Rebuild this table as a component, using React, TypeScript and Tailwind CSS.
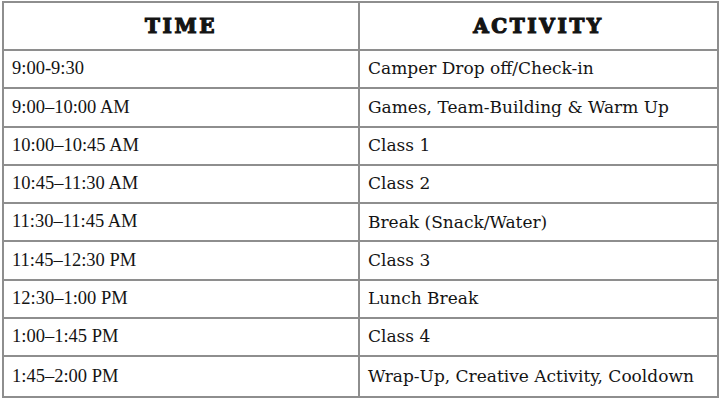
const rows = [
  { time: '9:00-9:30', activity: 'Camper Drop off/Check-in' },
  { time: '9:00–10:00 AM', activity: 'Games, Team-Building & Warm Up' },
  { time: '10:00–10:45 AM', activity: 'Class 1' },
  { time: '10:45–11:30 AM', activity: 'Class 2' },
  { time: '11:30–11:45 AM', activity: 'Break (Snack/Water)' },
  { time: '11:45–12:30 PM', activity: 'Class 3' },
  { time: '12:30–1:00 PM', activity: 'Lunch Break' },
  { time: '1:00–1:45 PM', activity: 'Class 4' },
  { time: '1:45–2:00 PM', activity: 'Wrap-Up, Creative Activity, Cooldown' },
];

export default function App() {
  return (
    <div className="w-[720px] h-[400px] bg-white pl-[2px] pt-[1px]">
      <div className="w-[717px] border-2 border-[#8e8e8e] text-[#141414]">
        {/* header */}
        <div className="grid grid-cols-[356px_1fr] h-[48px] border-b-2 border-[#8e8e8e]">
          <div className="flex items-center justify-center border-r-2 border-[#8e8e8e] font-['DejaVu_Serif',serif] font-bold text-[20px] tracking-[2.6px] [-webkit-text-stroke:1.2px_#141414]">
            TIME
          </div>
          <div className="flex items-center justify-center font-['DejaVu_Serif',serif] font-bold text-[20px] tracking-[2.6px] [-webkit-text-stroke:1.2px_#141414]">
            ACTIVITY
          </div>
        </div>

        {/* body */}
        {rows.map((row, i) => (
          <div
            key={i}
            className={`grid grid-cols-[356px_1fr] h-[38.3px] ${i < rows.length - 1 ? 'border-b-2 border-[#8e8e8e]' : ''}`}
          >
            <div className="flex items-center pl-[8px] border-r-2 border-[#8e8e8e] font-['Liberation_Serif',serif] text-[18.5px]">
              {row.time}
            </div>
            <div className="flex items-center pl-[8px] font-['DejaVu_Serif',serif] text-[17px]">
              {row.activity}
            </div>
          </div>
        ))}
      </div>
    </div>
  );
}
